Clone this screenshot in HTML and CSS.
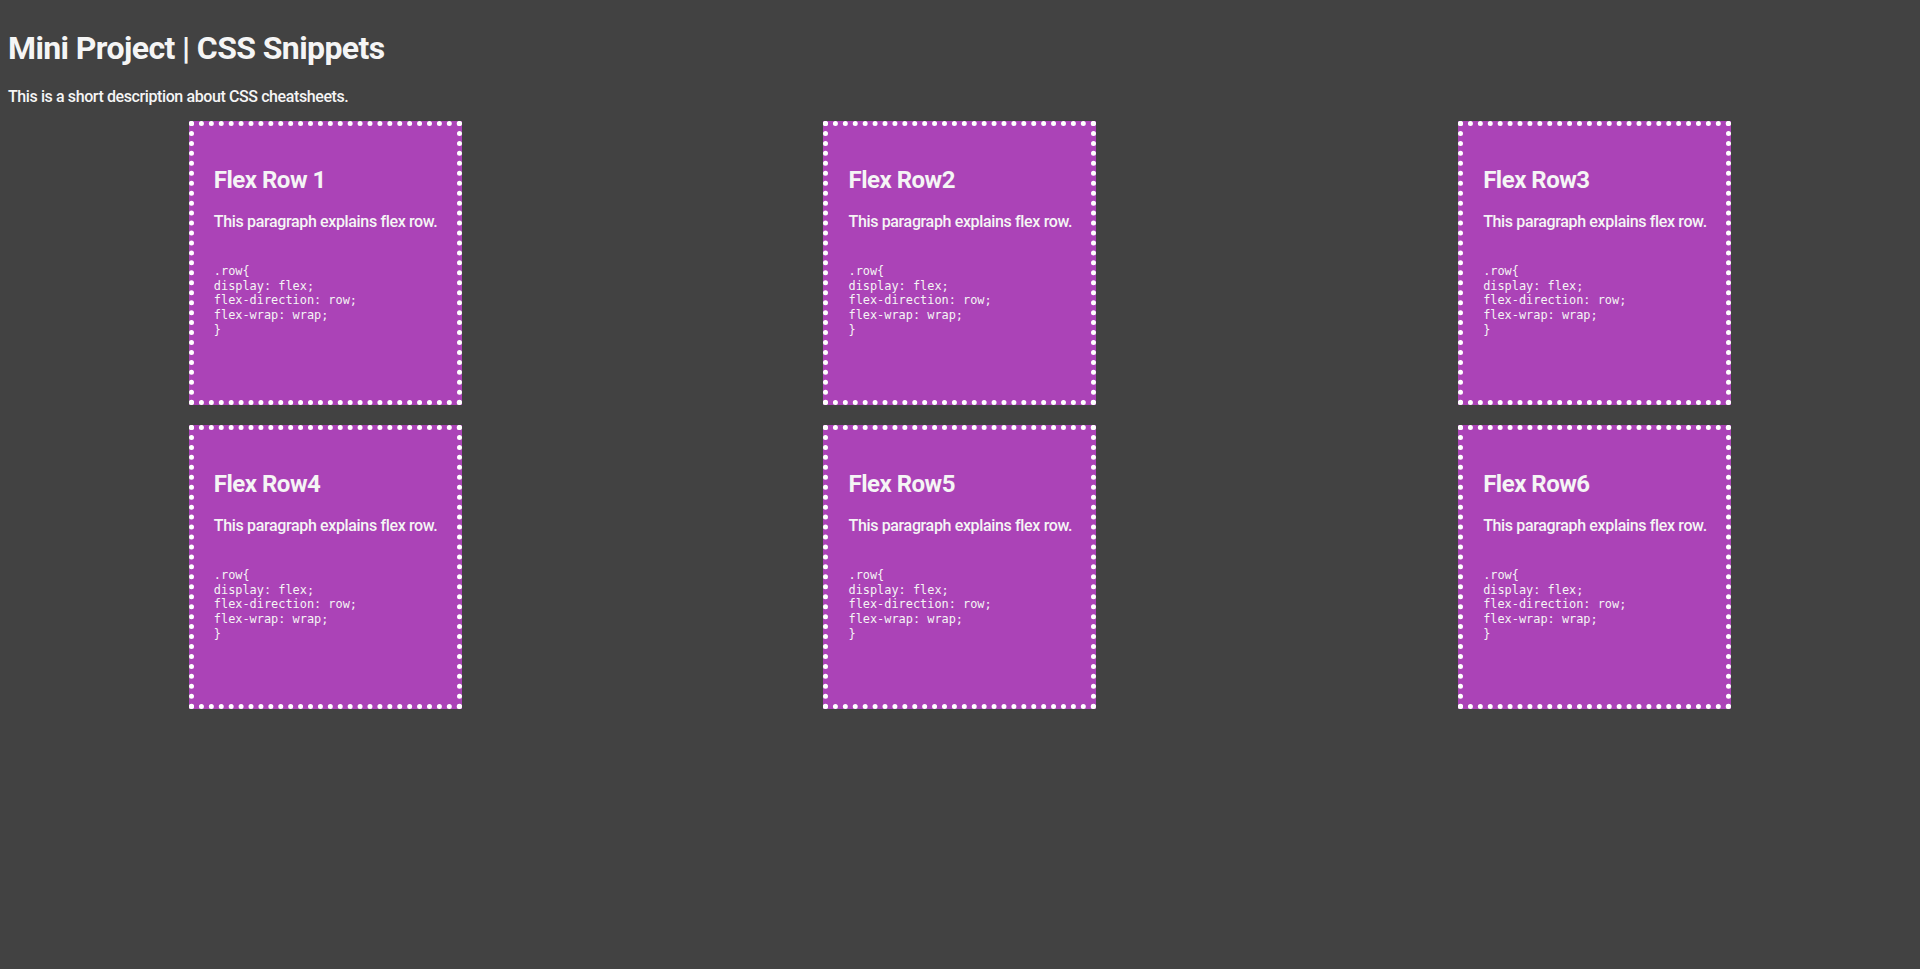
FILE: index.html
```html
<!DOCTYPE html>
<html lang="en">
<head>
<meta charset="utf-8">
<title>Mini Project | CSS Snippets</title>
<link rel="stylesheet" href="styles.css">
</head>
<body>
<div class="page">
  <h1 class="title">Mini Project | CSS Snippets</h1>
  <p class="intro">This is a short description about CSS cheatsheets.</p>

  <div class="row">
    <div class="card">
      <h2 class="card-title">Flex Row 1</h2>
      <p class="card-text">This paragraph explains flex row.</p>
      <pre class="card-code">.row{
display: flex;
flex-direction: row;
flex-wrap: wrap;
}</pre>
    </div>
    <div class="card">
      <h2 class="card-title">Flex Row2</h2>
      <p class="card-text">This paragraph explains flex row.</p>
      <pre class="card-code">.row{
display: flex;
flex-direction: row;
flex-wrap: wrap;
}</pre>
    </div>
    <div class="card">
      <h2 class="card-title">Flex Row3</h2>
      <p class="card-text">This paragraph explains flex row.</p>
      <pre class="card-code">.row{
display: flex;
flex-direction: row;
flex-wrap: wrap;
}</pre>
    </div>
  </div>

  <div class="row">
    <div class="card">
      <h2 class="card-title">Flex Row4</h2>
      <p class="card-text">This paragraph explains flex row.</p>
      <pre class="card-code">.row{
display: flex;
flex-direction: row;
flex-wrap: wrap;
}</pre>
    </div>
    <div class="card">
      <h2 class="card-title">Flex Row5</h2>
      <p class="card-text">This paragraph explains flex row.</p>
      <pre class="card-code">.row{
display: flex;
flex-direction: row;
flex-wrap: wrap;
}</pre>
    </div>
    <div class="card">
      <h2 class="card-title">Flex Row6</h2>
      <p class="card-text">This paragraph explains flex row.</p>
      <pre class="card-code">.row{
display: flex;
flex-direction: row;
flex-wrap: wrap;
}</pre>
    </div>
  </div>
</div>
</body>
</html>
```

FILE: styles.css
```css
html, body {
  margin: 0;
  padding: 0;
  background: #424242;
}

body {
  color: #f5f5f5;
  font-family: Roboto, "Liberation Sans", Arial, sans-serif;
}

.page {
  padding: 8px;
}

.title {
  margin: 22px 0 20px;
  font-size: 32px;
  line-height: 37px;
  font-weight: 700;
  letter-spacing: -0.6px;
}

.intro {
  margin: 0 0 15px;
  font-size: 16px;
  line-height: 19px;
  font-weight: 500;
  letter-spacing: -0.4px;
}

.row {
  display: flex;
  justify-content: space-around;
  margin-bottom: 20px;
}

.card {
  box-sizing: border-box;
  width: 273px;
  height: 284px;
  padding: 20px;
  background: #ab43b7;
  border: 5px dotted #ffffff;
}

.card-title {
  margin: 20px 0 18px;
  font-size: 24px;
  line-height: 28px;
  font-weight: 700;
  letter-spacing: -0.5px;
}

.card-text {
  margin: 0 0 33px;
  font-size: 16px;
  line-height: 19px;
  font-weight: 500;
  letter-spacing: -0.35px;
  white-space: nowrap;
}

.card-code {
  margin: 0;
  font-family: "DejaVu Sans Mono", "Liberation Mono", monospace;
  font-size: 11.9px;
  line-height: 14.7px;
}
```
